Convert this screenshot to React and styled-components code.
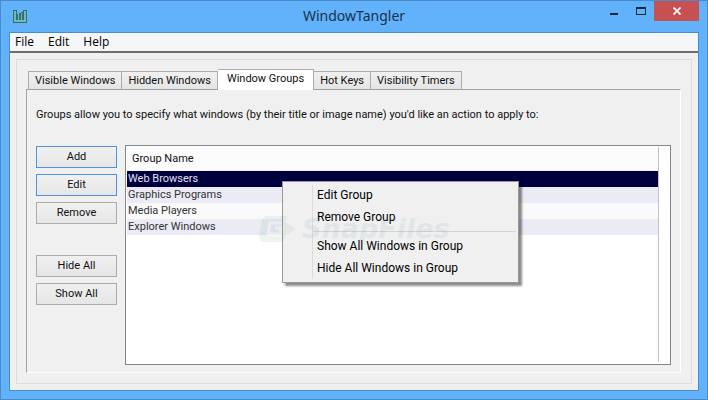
import React, { useState } from 'react';
import styled, { createGlobalStyle, css } from 'styled-components';

const UI_FONT = 'Roboto, "DejaVu Sans", sans-serif';
const TITLE_FONT = '"Noto Sans", sans-serif';
const MENU_FONT = '"Open Sans", sans-serif';

const TABS = ['Visible Windows', 'Hidden Windows', 'Window Groups', 'Hot Keys', 'Visibility Timers'];
const GROUPS = ['Web Browsers', 'Graphics Programs', 'Media Players', 'Explorer Windows'];

const GlobalStyle = createGlobalStyle`
  *, *::before, *::after {
    box-sizing: border-box;
  }

  body {
    margin: 0;
    font: 11px/16px ${UI_FONT};
    color: #111;
  }

  button {
    margin: 0;
    padding: 0;
    border: 0;
    border-radius: 0;
    background: none;
    color: inherit;
    font: inherit;
    white-space: nowrap;
  }
`;

const Window = styled.div`
  display: flex;
  flex-direction: column;
  min-height: 100vh;
  padding: 0 8px 8px;
  border: 1px solid #4a8ccb;
  background: #62b1fb;
`;

const TitleBar = styled.header`
  display: grid;
  grid-template-columns: 1fr auto 1fr;
  height: 31px;
`;

const AppIcon = styled.svg`
  width: 14px;
  height: 13px;
  margin: 9px 0 0 4px;
`;

const Title = styled.h1`
  margin: 0;
  font: 14px/30px ${TITLE_FONT};
  color: #17324d;
`;

const WindowControls = styled.div`
  display: flex;
  justify-content: flex-end;
`;

const ControlButton = styled.button`
  display: flex;
  width: ${({ $close }) => ($close ? 45 : 27)}px;
  height: 20px;
  align-items: center;
  justify-content: center;
  background: ${({ $close }) => ($close ? '#c75050' : 'transparent')};
`;

const Client = styled.div`
  display: flex;
  flex: 1;
  flex-direction: column;
  border: 1px solid #4a8ccb;
  background: #f0f0f0;
`;

const MenuBar = styled.nav`
  display: flex;
  gap: 14px;
  height: 20px;
  padding-left: 5px;
  border-bottom: 2px solid #706c6c;
  background: #f5f6f7;
`;

const MenuBarItem = styled.button`
  font: 12px/16px ${MENU_FONT};
  color: #000;
`;

const GroupBox = styled.main`
  display: flex;
  flex: 1;
  flex-direction: column;
  margin: 6px;
  padding: 9px 10px 10px 9px;
  border: 1px solid #dcdcdc;
`;

const TabList = styled.div`
  display: flex;
  align-items: flex-end;
  height: 20px;
  padding-left: 2px;
`;

const activeTab = css`
  z-index: 1;
  height: 21px;
  margin-bottom: -1px;
  padding: 0 9px 2px;
  background: #fff;
`;

const Tab = styled.button`
  position: relative;
  height: 18px;
  padding: 0 6px;
  border: solid #acacac;
  border-width: 1px 1px 0 0;
  background: linear-gradient(#f0f0f0, #e5e5e5);

  &:first-child {
    border-left-width: 1px;
  }

  ${({ $active }) => $active && activeTab}
`;

const TabPanel = styled.section`
  display: flex;
  flex: 1;
  flex-direction: column;
  padding: 17px 9px 7px;
  border: 1px solid #fff;
  border-top-color: #a0a0a0;
  border-left-color: #a0a0a0;
`;

const Description = styled.p`
  margin: 0 0 22px;
  white-space: nowrap;
`;

const Columns = styled.div`
  display: flex;
  flex: 1;
  gap: 8px;
`;

const Actions = styled.div`
  display: flex;
  flex-direction: column;
  gap: 6px;
  width: 81px;
  padding-top: 1px;
`;

const ActionButton = styled.button`
  height: 22px;
  margin-top: ${({ $spaced }) => ($spaced ? 25 : 0)}px;
  border: 1px solid ${({ $accent }) => ($accent ? '#4f96d8' : '#acacac')};
  background: linear-gradient(#f0f0f0, #e6e6e6);
`;

const ListBox = styled.div`
  position: relative;
  display: flex;
  flex: 1;
  min-height: 220px;
  padding: 1px 11px 2px 1px;
  border: 1px solid #828790;
  background: #fff;
`;

const ListArea = styled.div`
  flex: 1;
  border-right: 1px solid #c2c2c2;
`;

const GroupTable = styled.table`
  width: 100%;
  border-spacing: 0;
`;

const HeaderCell = styled.th`
  height: 24px;
  padding: 1px 5px 0;
  border-bottom: 1px solid #f2f2f4;
  background: #fcfcfd;
  font-weight: normal;
  text-align: left;
`;

const GroupRow = styled.tr`
  height: 16px;
  background: #fafafb;
  color: #333;

  &:nth-child(even) {
    background: #ebebf5;
  }

  ${({ $selected }) => $selected && css`
    background: #00003f;
    color: #e0e0ee;
  `}
`;

const GroupCell = styled.td`
  padding: 0 1px;
  line-height: 16px;
`;

const ContextMenu = styled.div`
  position: absolute;
  top: 35px;
  left: 156px;
  width: 237px;
  padding: 2px 2px 3px;
  border: 1px solid #979797;
  background: linear-gradient(#dcdcdc, #dcdcdc) 29px 3px / 1px calc(100% - 6px) no-repeat #f0f0f0;
  box-shadow: 3px 3px 2px rgba(0, 0, 0, 0.45);
`;

const ContextItem = styled.button`
  display: block;
  width: 100%;
  padding-left: 32px;
  font-size: 12px;
  line-height: 22px;
  color: #000;
  text-align: left;
`;

const Separator = styled.hr`
  margin: 3px 0 3px 28px;
  border: 0;
  border-top: 1px solid #d2d4d6;
`;

const Watermark = styled.div`
  position: absolute;
  top: 68px;
  left: 132px;
  display: flex;
  align-items: center;
  gap: 4px;
  color: #5c93ad;
  font: italic 900 27px/30px "DejaVu Sans", sans-serif;
  opacity: 0.1;
  pointer-events: none;
`;

export default function App() {
  const [tab, setTab] = useState('Window Groups');
  const [selected, setSelected] = useState('Web Browsers');

  return (
    <>
      <GlobalStyle />
      <Window>
        <TitleBar>
          <AppIcon viewBox="0 0 14 13" aria-hidden="true">
            <path d="M0 0h14v13H0z" fill="#2b6f7a" />
            <path d="M1 1h2v9h8V1h2v11H1zM5 4h1v6H5zM8 3h1v7H8z" fill="#79b8b0" />
            <path d="M4 0h6v2H8v1H6v1H4z" fill="#62b1fb" />
          </AppIcon>
          <Title>WindowTangler</Title>
          <WindowControls>
            <ControlButton aria-label="Minimize">
              <svg width="8" height="8"><path d="M0 6h8v2H0z" fill="#17283a" /></svg>
            </ControlButton>
            <ControlButton aria-label="Maximize">
              <svg width="10" height="8"><path d="M0 0h10v8H0zM1 2v5h8V2z" fill="#17283a" fillRule="evenodd" /></svg>
            </ControlButton>
            <ControlButton $close aria-label="Close">
              <svg width="8" height="8" viewBox="0 0 8 8"><path d="M.5.5l7 7m0-7l-7 7" stroke="#fff" strokeWidth="1.7" /></svg>
            </ControlButton>
          </WindowControls>
        </TitleBar>

        <Client>
          <MenuBar>
            <MenuBarItem>File</MenuBarItem>
            <MenuBarItem>Edit</MenuBarItem>
            <MenuBarItem>Help</MenuBarItem>
          </MenuBar>

          <GroupBox>
            <TabList role="tablist">
              {TABS.map((name) => (
                <Tab
                  key={name}
                  role="tab"
                  aria-selected={name === tab}
                  $active={name === tab}
                  onClick={() => setTab(name)}
                >
                  {name}
                </Tab>
              ))}
            </TabList>

            <TabPanel role="tabpanel" aria-label={tab}>
              <Description>
                Groups allow you to specify what windows (by their title or image name) you'd like an action to apply to:
              </Description>
              <Columns>
                <Actions>
                  <ActionButton $accent>Add</ActionButton>
                  <ActionButton $accent>Edit</ActionButton>
                  <ActionButton>Remove</ActionButton>
                  <ActionButton $spaced>Hide All</ActionButton>
                  <ActionButton>Show All</ActionButton>
                </Actions>

                <ListBox>
                  <ListArea>
                    <GroupTable>
                      <thead>
                        <tr><HeaderCell scope="col">Group Name</HeaderCell></tr>
                      </thead>
                      <tbody>
                        {GROUPS.map((name) => (
                          <GroupRow key={name} $selected={name === selected} onClick={() => setSelected(name)}>
                            <GroupCell>{name}</GroupCell>
                          </GroupRow>
                        ))}
                      </tbody>
                    </GroupTable>
                  </ListArea>

                  <ContextMenu role="menu">
                    <ContextItem role="menuitem">Edit Group</ContextItem>
                    <ContextItem role="menuitem">Remove Group</ContextItem>
                    <Separator />
                    <ContextItem role="menuitem">Show All Windows in Group</ContextItem>
                    <ContextItem role="menuitem">Hide All Windows in Group</ContextItem>
                  </ContextMenu>
                  <Watermark>
                    <svg width="40" height="28" viewBox="0 0 40 28" aria-hidden="true">
                      <path d="M7 1h22l-2 6 11 7-11 7-2 6H3L1 22 4 4z" fill="#62a37c" />
                      <path d="M24 8H12l-2 11h12l1-6h-6" fill="none" stroke="#fff" strokeWidth="3" />
                    </svg>
                    SnapFiles
                  </Watermark>
                </ListBox>
              </Columns>
            </TabPanel>
          </GroupBox>
        </Client>
      </Window>
    </>
  );
}
